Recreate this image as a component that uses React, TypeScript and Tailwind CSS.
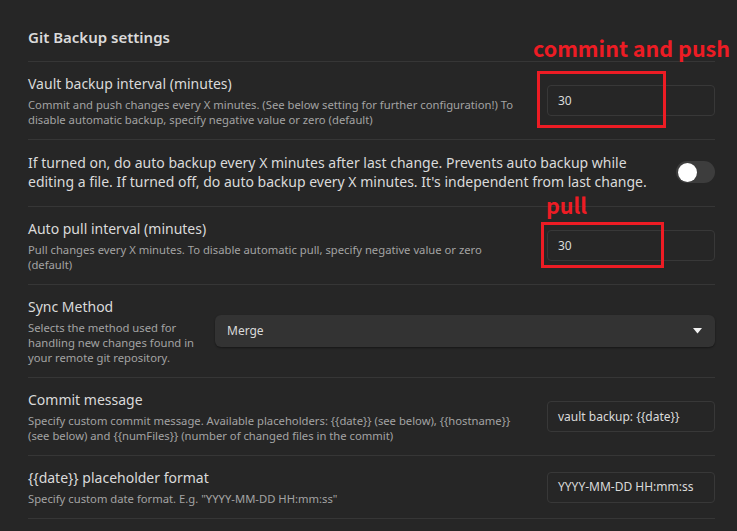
import React from "react";

const font = { fontFamily: '"Noto Sans", "Open Sans", sans-serif' };

function Row({
  title,
  desc,
  control,
  infoClass = "w-[500px]",
}: {
  title: React.ReactNode;
  desc: React.ReactNode;
  control: React.ReactNode;
  infoClass?: string;
}) {
  return (
    <div className="flex items-center justify-between border-t border-[#363636] py-3">
      <div className={infoClass}>
        <div className="whitespace-nowrap text-[14px] leading-[20px] text-[#dadada]">{title}</div>
        <div className="mt-[3px] whitespace-nowrap text-[11.25px] leading-[15px] text-[#a3a3a3]">{desc}</div>
      </div>
      {control}
    </div>
  );
}

function TextInput({ value }: { value: string }) {
  return (
    <div className="flex h-[31px] w-[168px] shrink-0 items-center rounded-[4px] border border-[#383838] bg-[#262626] pl-[10px] text-[12px] text-[#dadada]">
      {value}
    </div>
  );
}

export default function App() {
  return (
    <div className="relative h-[531px] w-[737px] overflow-hidden bg-[#262626]" style={font}>
      <div className="pl-[28px] pr-[22px]">
        <div className="pt-[26px] pb-[13px] text-[15px] font-semibold leading-[22px] text-[#dadada]">
          Git Backup settings
        </div>

        <Row
          title="Vault backup interval (minutes)"
          desc={
            <>
              Commit and push changes every X minutes. (See below setting for further configuration!) To
              <br />
              disable automatic backup, specify negative value or zero (default)
            </>
          }
          control={<TextInput value="30" />}
        />

        <div className="flex items-center justify-between border-t border-[#363636] pt-[13px] pb-[15px]">
          <div className="whitespace-nowrap text-[14px] leading-[19px] text-[#dadada]">
            If turned on, do auto backup every X minutes after last change. Prevents auto backup while
            <br />
            editing a file. If turned off, do auto backup every X minutes. It's independent from last change.
          </div>
          <div className="flex h-[22px] w-[39px] shrink-0 items-center rounded-full bg-[#3d3d3d] pl-[2px]">
            <div className="h-[19px] w-[19px] rounded-full bg-white" />
          </div>
        </div>

        <Row
          title="Auto pull interval (minutes)"
          desc={
            <>
              Pull changes every X minutes. To disable automatic pull, specify negative value or zero
              <br />
              (default)
            </>
          }
          control={<TextInput value="30" />}
        />

        <div className="flex items-center gap-[20px] border-t border-[#363636] py-3">
          <div className="w-[167px] shrink-0">
            <div className="text-[14px] leading-[20px] text-[#dadada]">Sync Method</div>
            <div className="mt-[3px] whitespace-nowrap text-[11.25px] leading-[15px] text-[#a3a3a3]">
              Selects the method used for
              <br />
              handling new changes found in
              <br />
              your remote git repository.
            </div>
          </div>
          <div className="flex h-[32px] flex-1 items-center justify-between rounded-[6px] bg-[#333333] pl-[12px] pr-[13px] text-[12px] text-[#dadada] shadow-[0_1px_2px_rgba(0,0,0,0.4)]">
            <span>Merge</span>
            <svg width="9" height="6" viewBox="0 0 9 6">
              <path d="M0 0 H9 L4.5 5.5 Z" fill="#f2f2f2" />
            </svg>
          </div>
        </div>

        <Row
          title="Commit message"
          desc={
            <>
              Specify custom commit message. Available placeholders: {"{{date}}"} (see below), {"{{hostname}}"}
              <br />
              (see below) and {"{{numFiles}}"} (number of changed files in the commit)
            </>
          }
          control={<TextInput value="vault backup: {{date}}" />}
        />

        <Row
          title="{{date}} placeholder format"
          desc={'Specify custom date format. E.g. "YYYY-MM-DD HH:mm:ss"'}
          control={<TextInput value="YYYY-MM-DD HH:mm:ss" />}
        />
        <div className="border-t border-[#363636]" />
      </div>

      {/* annotations */}
      <div
        className="absolute left-[533px] top-[34px] whitespace-nowrap text-[21.5px] font-bold leading-[28px] text-[#ed1c24]"
        style={{ fontFamily: '"Noto Sans CJK SC", "Noto Sans", sans-serif' }}
      >
        commint and push
      </div>
      <div className="absolute left-[537px] top-[71px] h-[57px] w-[129px] border-[3px] border-[#ed1c24]" />
      <div
        className="absolute left-[546px] top-[191px] text-[21.5px] font-bold leading-[28px] text-[#ed1c24]"
        style={{ fontFamily: '"Noto Sans CJK SC", "Noto Sans", sans-serif' }}
      >
        pull
      </div>
      <div className="absolute left-[541px] top-[222px] h-[46px] w-[123px] border-[3px] border-[#ed1c24]" />
    </div>
  );
}
